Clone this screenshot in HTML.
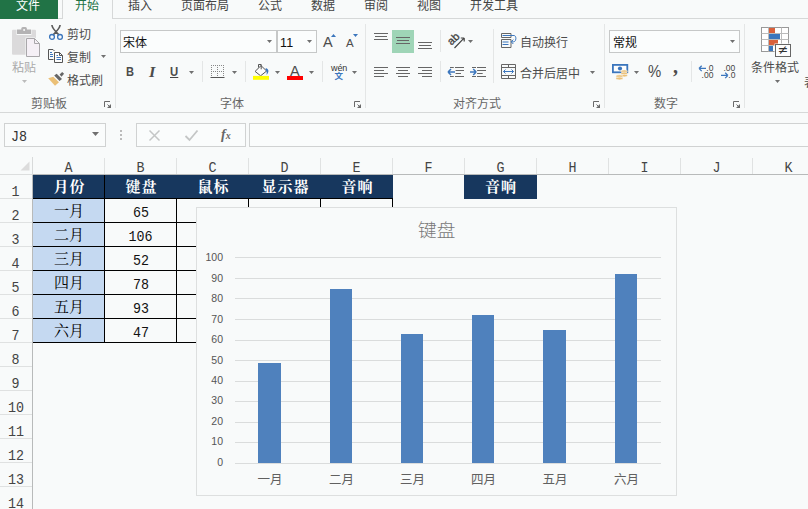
<!DOCTYPE html>
<html lang="zh-CN"><head><meta charset="utf-8"><title>Excel</title>
<style>
*{margin:0;padding:0;box-sizing:border-box}
html,body{width:808px;height:509px;overflow:hidden;background:#f8fafa}
body{position:relative;font-family:"Liberation Sans","Noto Sans CJK SC",sans-serif;font-size:12px;color:#444;line-height:1}
.a{position:absolute}
.t{position:absolute;white-space:nowrap;font-size:12px;line-height:14px;color:#4c4c4c;margin-top:1px}
.tab{position:absolute;top:-1px;font-size:12px;line-height:14px;color:#444;white-space:nowrap}
.gl{position:absolute;top:97px;font-size:12px;line-height:14px;color:#666;white-space:nowrap}
.vs{position:absolute;width:1px;background:#e4e6e6}
.arr{position:absolute;width:5px;height:3px;background:#707070;clip-path:polygon(0 0,100% 0,50% 100%)}
.ch{position:absolute;top:157px;height:17px;font-family:"Liberation Mono","Noto Serif CJK SC",monospace;font-size:15px;line-height:17px;text-align:center;color:#444;width:72px;margin-top:3px}
.sx{display:inline-block;transform:scaleX(0.889)}
.rh{position:absolute;left:0;width:32px;text-align:center;font-family:"Liberation Mono","Noto Serif CJK SC",monospace;font-size:15px;line-height:16px;color:#444;margin-top:3px}
.hd{position:absolute;background:#17375e;color:#fff;font-family:"Liberation Serif","Noto Serif CJK SC",serif;font-weight:bold;font-size:15px;letter-spacing:1px;padding-left:1px;line-height:24px;text-align:center;height:24px}
.mc{position:absolute;background:#c5d9f1;color:#000;font-family:"Liberation Serif","Noto Serif CJK SC",serif;font-size:15px;line-height:24px;text-align:center}
.nc{position:absolute;color:#111;font-family:"Liberation Mono","Noto Serif CJK SC",monospace;font-size:15px;line-height:24px;text-align:center;padding-top:2px}
.bl{position:absolute;background:#000}
.nb{font-family:"Liberation Mono","Noto Serif CJK SC",monospace;font-size:15px;line-height:16px;color:#333}
.yl{position:absolute;left:198px;width:25px;text-align:right;font-size:10.5px;line-height:12px;color:#555}
.xl{position:absolute;top:473px;margin-left:0.5px;width:60px;text-align:center;font-size:12.5px;line-height:15px;color:#606060}
.g{position:absolute;left:235px;width:426px;height:1px;background:#dadcdc}
.bar{position:absolute;background:#4f81bd}
.dl{position:absolute;width:7px;height:6px}
</style></head>
<body>
<div class="a" style="left:0;top:18px;width:808px;height:1px;background:#d6d8d8"></div>
<div class="a" style="left:0;top:0;width:58px;height:19px;background:#217346"></div>
<div class="tab" style="left:16px;color:#fff">文件</div>
<div class="a" style="left:62px;top:-2px;width:51px;height:21px;background:#f8fafa;border:1px solid #d6d8d8;border-bottom:none"></div>
<div class="tab" style="left:75px;color:#217346">开始</div>
<div class="tab" style="left:128px">插入</div>
<div class="tab" style="left:181px">页面布局</div>
<div class="tab" style="left:258px">公式</div>
<div class="tab" style="left:311px">数据</div>
<div class="tab" style="left:364px">审阅</div>
<div class="tab" style="left:417px">视图</div>
<div class="tab" style="left:470px">开发工具</div>
<div class="a" style="left:0;top:112px;width:808px;height:1px;background:#d6d8d8"></div>
<div class="vs" style="left:115px;top:24px;height:84px"></div>
<div class="vs" style="left:365px;top:24px;height:84px"></div>
<div class="vs" style="left:604px;top:24px;height:84px"></div>
<div class="vs" style="left:744px;top:24px;height:84px"></div>
<div class="vs" style="left:202px;top:61px;height:21px"></div>
<div class="vs" style="left:245px;top:61px;height:21px"></div>
<div class="vs" style="left:322px;top:61px;height:21px"></div>
<div class="vs" style="left:440px;top:61px;height:21px"></div>
<div class="vs" style="left:691px;top:61px;height:21px"></div>
<div class="vs" style="left:440px;top:30px;height:22px"></div>
<div class="vs" style="left:493px;top:29px;height:54px"></div>
<div class="gl" style="left:31px">剪贴板</div>
<div class="gl" style="left:220px">字体</div>
<div class="gl" style="left:453px">对齐方式</div>
<div class="gl" style="left:654px">数字</div>
<svg class="a" style="left:104px;top:101px" width="8" height="7" viewBox="0 0 8 7"><path d="M0.5 6V0.5H6" fill="none" stroke="#6a6a6a"/><path d="M7 3V7H3Z" fill="#6a6a6a"/><path d="M3.5 3.5L6 6" stroke="#6a6a6a" fill="none"/></svg>
<svg class="a" style="left:354px;top:101px" width="8" height="7" viewBox="0 0 8 7"><path d="M0.5 6V0.5H6" fill="none" stroke="#6a6a6a"/><path d="M7 3V7H3Z" fill="#6a6a6a"/><path d="M3.5 3.5L6 6" stroke="#6a6a6a" fill="none"/></svg>
<svg class="a" style="left:593px;top:101px" width="8" height="7" viewBox="0 0 8 7"><path d="M0.5 6V0.5H6" fill="none" stroke="#6a6a6a"/><path d="M7 3V7H3Z" fill="#6a6a6a"/><path d="M3.5 3.5L6 6" stroke="#6a6a6a" fill="none"/></svg>
<svg class="a" style="left:733px;top:101px" width="8" height="7" viewBox="0 0 8 7"><path d="M0.5 6V0.5H6" fill="none" stroke="#6a6a6a"/><path d="M7 3V7H3Z" fill="#6a6a6a"/><path d="M3.5 3.5L6 6" stroke="#6a6a6a" fill="none"/></svg>
<svg class="a" style="left:11px;top:26px" width="31" height="32" viewBox="0 0 31 32">
<rect x="1" y="3.8" width="24" height="25" rx="1" fill="#dbdadb"/>
<rect x="5.5" y="3" width="15" height="6" fill="#f8fafa"/>
<rect x="6" y="3.5" width="14" height="4.5" fill="#b4b3b4"/>
<rect x="10.3" y="0.9" width="5.6" height="5" rx="1.5" fill="#b4b3b4"/>
<circle cx="13.1" cy="3.9" r="1" fill="#f8fafa"/>
<path d="M14.5 11.5H24L29.5 17V31.5H14.5Z" fill="#f8fafa"/>
<path d="M15.5 12.5H23.5L28.5 17.5V30.5H15.5Z" fill="#f5f0f6" stroke="#a9a7aa"/>
<path d="M23.5 12.5V17.5H28.5" fill="none" stroke="#a9a7aa"/>
</svg>
<div class="t" style="left:12px;top:60px;color:#aaa">粘贴</div>
<div class="arr" style="left:22px;top:80px;background:#bbb"></div>
<svg class="a" style="left:48px;top:25px" width="16" height="16" viewBox="0 0 16 16">
<path d="M4 0.5C4.3 3 6 5 10.6 9.6M12 0.5C11.7 3 10 5 5.4 9.6" stroke="#5a5a5a" stroke-width="1.7" fill="none" stroke-linecap="round"/>
<circle cx="4" cy="11.9" r="2.4" fill="none" stroke="#3b76bd" stroke-width="1.3"/>
<circle cx="12" cy="11.9" r="2.4" fill="none" stroke="#3b76bd" stroke-width="1.3"/>
</svg>
<div class="t" style="left:67px;top:27px">剪切</div>
<svg class="a" style="left:48px;top:49px" width="16" height="15" viewBox="0 0 16 15">
<path d="M5.5 10.5H0.5V0.5H5L6.5 2" fill="none" stroke="#555"/>
<path d="M2 3.5H4M2 5.5H5M2 7.5H5" stroke="#3b76bd"/>
<path d="M6.5 3.5H11.5L14.5 6.5V13.5H6.5Z" fill="#fdfdfd" stroke="#555"/>
<path d="M11.5 3.5V6.5H14.5" fill="none" stroke="#555"/>
<path d="M8.5 6.5H10M8.5 8.5H13M8.5 10.5H13" stroke="#3b76bd"/>
</svg>
<div class="t" style="left:67px;top:50px">复制</div>
<div class="arr" style="left:101px;top:55px"></div>
<svg class="a" style="left:48px;top:71px" width="17" height="16" viewBox="0 0 17 16">
<path d="M14.2 0.9L16.1 2.8L13.5 5.7L11.6 3.5Z" fill="#666"/>
<path d="M8.7 2.8L14 8L11.5 10L6.2 4.6Z" fill="#666"/>
<path d="M5.3 5.8L11 11.2L7 14.8L0.2 7.3Z" fill="#ebc077"/>
</svg>
<div class="t" style="left:67px;top:73px">格式刷</div>
<div class="a" style="left:120px;top:30px;width:157px;height:23px;border:1px solid #c6c8c8;background:#fbfdfd"></div>
<div class="t" style="left:123px;top:35px;color:#111">宋体</div>
<div class="arr" style="left:267px;top:40px"></div>
<div class="a" style="left:277px;top:30px;width:40px;height:23px;border:1px solid #c6c8c8;background:#fbfdfd"></div>
<div class="t" style="left:280px;top:35px;color:#111;font-size:12.5px;letter-spacing:0.3px">11</div>
<div class="arr" style="left:307px;top:40px"></div>
<div class="t" style="left:323px;top:33px;font-size:14.5px;line-height:16px">A</div>
<div class="a" style="left:331px;top:34px;width:5px;height:3px;background:#3b76bd;clip-path:polygon(50% 0,100% 100%,0 100%)"></div>
<div class="t" style="left:346px;top:35px;font-size:11.5px;line-height:14px">A</div>
<div class="a" style="left:353px;top:34px;width:5px;height:3px;background:#3b76bd;clip-path:polygon(0 0,100% 0,50% 100%)"></div>
<div class="t" style="left:126px;top:64px;font-weight:bold;font-size:12.3px;line-height:15px;transform:scaleX(0.9);transform-origin:0 0">B</div>
<div class="t" style="left:149px;top:64px;font-style:italic;font-family:'Liberation Serif',serif;font-weight:bold;font-size:13.6px;line-height:15px;transform:scaleX(1.2);transform-origin:0 0">I</div>
<div class="t" style="left:170px;top:64px;font-size:12.3px;font-weight:bold;line-height:15px;border-bottom:1px solid #444;height:13px;transform:scaleX(0.92);transform-origin:0 0">U</div>
<div class="arr" style="left:189px;top:71px"></div>
<svg class="a" style="left:210px;top:64px" width="15" height="15" viewBox="0 0 15 15">
<path d="M1 1.5H14M1 7.5H14M1.5 1V13M7.5 1V13M13.5 1V13" stroke="#888" stroke-dasharray="1 1" fill="none"/>
<path d="M0.5 13.5H14.5" stroke="#555"/>
</svg>
<div class="arr" style="left:232px;top:71px"></div>
<svg class="a" style="left:253px;top:63px" width="17" height="18" viewBox="0 0 17 18">
<path d="M8 2.6L13.6 8L7.6 12.8L2.1 8.4Z" fill="#fdfdfd" stroke="#555"/>
<path d="M5.5 4.5V1.5H8.2V6.3" fill="none" stroke="#555"/>
<path d="M12.8 5C15.6 6 16.6 8.5 13.6 12C13.8 9.5 14 8.5 12.6 7Z" fill="#3b76bd"/>
<rect x="0" y="12.9" width="16" height="3.9" fill="#ffff00"/>
</svg>
<div class="arr" style="left:275px;top:71px"></div>
<div class="t" style="left:290px;top:62px;font-size:14.5px;line-height:16px">A</div>
<div class="a" style="left:287px;top:76px;width:16px;height:4px;background:#f00"></div>
<div class="arr" style="left:309px;top:71px"></div>
<div class="t" style="left:331px;top:61px;font-size:9px;line-height:12px;letter-spacing:-0.1px;color:#333">wén</div>
<div class="t" style="left:334.5px;top:69.5px;font-size:8.5px;line-height:10px;color:#3b76bd;font-weight:bold">文</div>
<div class="arr" style="left:352px;top:71px"></div>
<div class="a" style="left:374.0px;top:33px;width:14px;height:1px;background:#666"></div>
<div class="a" style="left:375.0px;top:36px;width:12px;height:1px;background:#666"></div>
<div class="a" style="left:374.0px;top:39px;width:14px;height:1px;background:#666"></div>
<div class="a" style="left:392px;top:30px;width:22px;height:23px;background:#9fd5b7"></div>
<div class="a" style="left:396.0px;top:37px;width:14px;height:1px;background:#666"></div>
<div class="a" style="left:397.0px;top:40px;width:12px;height:1px;background:#666"></div>
<div class="a" style="left:396.0px;top:43px;width:14px;height:1px;background:#666"></div>
<div class="a" style="left:418.0px;top:42px;width:14px;height:1px;background:#666"></div>
<div class="a" style="left:419.0px;top:45px;width:12px;height:1px;background:#666"></div>
<div class="a" style="left:418.0px;top:48px;width:14px;height:1px;background:#666"></div>
<div class="a" style="left:374px;top:67px;width:14px;height:1px;background:#666"></div>
<div class="a" style="left:374px;top:70px;width:10px;height:1px;background:#666"></div>
<div class="a" style="left:374px;top:73px;width:14px;height:1px;background:#666"></div>
<div class="a" style="left:374px;top:76px;width:10px;height:1px;background:#666"></div>
<div class="a" style="left:396.0px;top:67px;width:14px;height:1px;background:#666"></div>
<div class="a" style="left:398.0px;top:70px;width:10px;height:1px;background:#666"></div>
<div class="a" style="left:396.0px;top:73px;width:14px;height:1px;background:#666"></div>
<div class="a" style="left:398.0px;top:76px;width:10px;height:1px;background:#666"></div>
<div class="a" style="left:418px;top:67px;width:14px;height:1px;background:#666"></div>
<div class="a" style="left:422px;top:70px;width:10px;height:1px;background:#666"></div>
<div class="a" style="left:418px;top:73px;width:14px;height:1px;background:#666"></div>
<div class="a" style="left:422px;top:76px;width:10px;height:1px;background:#666"></div>
<svg class="a" style="left:446px;top:31px" width="20" height="19" viewBox="0 0 20 19">
<text x="0" y="0" font-family="Liberation Sans, sans-serif" font-size="11" fill="#444" stroke="#444" stroke-width="0.35" transform="translate(5.6,14.8) rotate(-45)">ab</text>
<path d="M8.5 17L18 7.2M18.2 7H14.8M18.2 7V10.4" stroke="#444" stroke-width="1.2" fill="none"/>
</svg>
<div class="arr" style="left:468px;top:40px"></div>
<svg class="a" style="left:447px;top:64px" width="18" height="15" viewBox="0 0 18 15">
<path d="M3 3.5H6.8M8 3.5H17M8.6 6.5H17M8.6 9.5H14M3 12.5H6.8M8 12.5H17" stroke="#666"/>
<path d="M1.2 8H8M1 8L4 5M1 8L4 11" stroke="#3b76bd" stroke-width="1.5" fill="none"/>
</svg>
<svg class="a" style="left:469px;top:64px" width="18" height="15" viewBox="0 0 18 15">
<path d="M3 3.5H7M8 3.5H17M8.1 6.5H17M8.1 9.5H13.7M3 12.5H7M8 12.5H17" stroke="#666"/>
<path d="M1 8H7M7.2 8L4.2 5M7.2 8L4.2 11" stroke="#3b76bd" stroke-width="1.5" fill="none"/>
</svg>
<svg class="a" style="left:501px;top:33px" width="16" height="15" viewBox="0 0 16 15">
<path d="M0.5 0.5H10V4.5H0.5ZM0.5 6.5H10V14.5H0.5Z" fill="none" stroke="#666"/>
<path d="M1.5 2.5H13C15.6 2.5 15.6 8.8 12.5 8.8H10.5M12.3 6.6L10.2 8.8L12.3 11M1.5 9H7.5M1.5 11.5H7.5" fill="none" stroke="#3b76bd"/>
</svg>
<div class="t" style="left:520px;top:35px">自动换行</div>
<svg class="a" style="left:501px;top:64px" width="16" height="16" viewBox="0 0 16 16">
<path d="M0.5 0.5H14.5V14.5H0.5ZM0.5 3.5H14.5M0.5 11.5H14.5M7.5 0.5V3.5M7.5 11.5V14.5" fill="none" stroke="#666"/>
<path d="M2.5 7.5H12.5M2.5 7.5L4.5 5.5M2.5 7.5L4.5 9.5M12.5 7.5L10.5 5.5M12.5 7.5L10.5 9.5" fill="none" stroke="#3b76bd"/>
</svg>
<div class="t" style="left:520px;top:66px">合并后居中</div>
<div class="arr" style="left:590px;top:71px"></div>
<div class="a" style="left:609px;top:30px;width:131px;height:23px;border:1px solid #c6c8c8;background:#fbfdfd"></div>
<div class="t" style="left:613px;top:35px;color:#111">常规</div>
<div class="arr" style="left:730px;top:40px"></div>
<svg class="a" style="left:612px;top:64px" width="17" height="17" viewBox="0 0 17 17">
<rect x="0.9" y="0.9" width="14.4" height="7.4" fill="#fdfdfd" stroke="#3b76bd" stroke-width="1.8"/>
<circle cx="8" cy="4.5" r="2.1" fill="#3b76bd"/>
<ellipse cx="12.2" cy="7.2" rx="3.3" ry="1.3" fill="#ebc077" stroke="#f8fafa" stroke-width="0.6"/>
<ellipse cx="12.2" cy="9.4" rx="3.3" ry="1.3" fill="#ebc077" stroke="#f8fafa" stroke-width="0.6"/>
<ellipse cx="12.2" cy="11.6" rx="3.3" ry="1.3" fill="#ebc077" stroke="#f8fafa" stroke-width="0.6"/>
<ellipse cx="7.4" cy="12.2" rx="3.5" ry="1.4" fill="#ebc077" stroke="#f8fafa" stroke-width="0.6"/>
<ellipse cx="7.4" cy="14.5" rx="3.5" ry="1.4" fill="#ebc077" stroke="#f8fafa" stroke-width="0.6"/>
</svg>
<div class="arr" style="left:634px;top:71px"></div>
<div class="t" style="left:648px;top:62px;font-size:16px;line-height:17px;transform:scaleX(0.93);transform-origin:0 0">%</div>
<div class="t" style="left:673px;top:54px;font-size:20px;line-height:22px;font-family:'Liberation Serif',serif;font-weight:bold">,</div>
<svg class="a" style="left:698px;top:64px" width="17" height="15" viewBox="0 0 17 15">
<path d="M1.2 4.4H8M1 4.4L3.7 1.7M1 4.4L3.7 7.1" stroke="#3b76bd" stroke-width="1.3" fill="none"/>
<text x="8.3" y="6.7" font-family="Liberation Sans, sans-serif" font-size="8.5" fill="#444">.0</text>
<text x="3.6" y="14.1" font-family="Liberation Sans, sans-serif" font-size="8.5" fill="#444">.00</text>
</svg>
<svg class="a" style="left:720px;top:64px" width="17" height="15" viewBox="0 0 17 15">
<text x="3.5" y="6.7" font-family="Liberation Sans, sans-serif" font-size="8.5" fill="#444">.00</text>
<path d="M1 11.4H7.7M7.9 11.4L5.2 8.7M7.9 11.4L5.2 14.1" stroke="#3b76bd" stroke-width="1.3" fill="none"/>
<text x="8.3" y="14.1" font-family="Liberation Sans, sans-serif" font-size="8.5" fill="#444">.0</text>
</svg>
<svg class="a" style="left:761px;top:27px" width="31" height="30" viewBox="0 0 31 30">
<rect x="0.5" y="0.5" width="27" height="24" fill="#fff" stroke="#999"/>
<path d="M0.5 6.5H27.5M0.5 12.5H27.5M0.5 18.5H27.5M7.5 0.5V24.5M20.5 0.5V24.5" stroke="#bbb" fill="none"/>
<rect x="8" y="1" width="6" height="5" fill="#d9603b"/>
<rect x="8" y="7" width="11" height="5" fill="#3b76bd"/>
<rect x="8" y="13" width="9" height="5" fill="#d9603b"/>
<rect x="8" y="19" width="4" height="5" fill="#3b76bd"/>
<rect x="13.5" y="16.5" width="17" height="14" fill="#f8fafa"/><rect x="14.5" y="17.5" width="15" height="12" fill="#fdfdfd" stroke="#666"/>
<text x="16.7" y="27.3" font-family="DejaVu Sans, sans-serif" font-size="12.5" fill="#333">≠</text>
</svg>
<div class="t" style="left:751px;top:60px">条件格式</div>
<div class="arr" style="left:775px;top:80px"></div>
<div class="t" style="left:804px;top:75px">表格</div>
<div class="a" style="left:4px;top:123px;width:102px;height:24px;border:1px solid #d0d2d2;background:#fafcfc"></div>
<div class="t nb" style="left:11px;top:129px"><span class="sx" style="transform-origin:0 50%">J8</span></div>
<div class="arr" style="left:92px;top:132px;width:7px;height:4px"></div>
<div class="a" style="left:120px;top:130px;width:2px;height:2px;background:#bbb"></div>
<div class="a" style="left:120px;top:134px;width:2px;height:2px;background:#bbb"></div>
<div class="a" style="left:120px;top:138px;width:2px;height:2px;background:#bbb"></div>
<div class="a" style="left:136px;top:123px;width:110px;height:24px;border:1px solid #d0d2d2;background:#fafcfc"></div>
<svg class="a" style="left:148px;top:129px" width="13" height="13" viewBox="0 0 13 13"><path d="M1.5 1.5L11.5 11.5M11.5 1.5L1.5 11.5" stroke="#c4c6c6" stroke-width="1.5" fill="none"/></svg>
<svg class="a" style="left:184px;top:129px" width="15" height="13" viewBox="0 0 15 13"><path d="M1.5 7L5.5 11L13.5 1.5" stroke="#c4c6c6" stroke-width="1.8" fill="none"/></svg>
<div class="t" style="left:221px;top:126px;font-family:'Liberation Serif',serif;font-style:italic;font-weight:bold;font-size:14px;line-height:16px;color:#666">f<span style="font-size:10px">x</span></div>
<div class="a" style="left:249px;top:123px;width:570px;height:24px;border:1px solid #d0d2d2;background:#fafcfc"></div>
<div class="a" style="left:0;top:174px;width:33px;height:1px;background:#dcdede"></div>
<div class="a" style="left:33px;top:174px;width:775px;height:1px;background:#b8baba"></div>
<div class="a" style="left:32px;top:157px;width:1px;height:18px;background:#d8dada"></div>
<div class="a" style="left:32px;top:175px;width:1px;height:334px;background:#b8baba"></div>
<svg class="a" style="left:20px;top:161px" width="10" height="10" viewBox="0 0 10 10"><path d="M9.5 0.5V9.5H0.5Z" fill="#dcdcdc"/></svg>
<div class="ch" style="left:33px"><span class="sx">A</span></div>
<div class="a" style="left:104px;top:158px;width:1px;height:16px;background:#e0e2e2"></div>
<div class="ch" style="left:105px"><span class="sx">B</span></div>
<div class="a" style="left:176px;top:158px;width:1px;height:16px;background:#e0e2e2"></div>
<div class="ch" style="left:177px"><span class="sx">C</span></div>
<div class="a" style="left:248px;top:158px;width:1px;height:16px;background:#e0e2e2"></div>
<div class="ch" style="left:249px"><span class="sx">D</span></div>
<div class="a" style="left:320px;top:158px;width:1px;height:16px;background:#e0e2e2"></div>
<div class="ch" style="left:321px"><span class="sx">E</span></div>
<div class="a" style="left:392px;top:158px;width:1px;height:16px;background:#e0e2e2"></div>
<div class="ch" style="left:393px"><span class="sx">F</span></div>
<div class="a" style="left:464px;top:158px;width:1px;height:16px;background:#e0e2e2"></div>
<div class="ch" style="left:465px"><span class="sx">G</span></div>
<div class="a" style="left:536px;top:158px;width:1px;height:16px;background:#e0e2e2"></div>
<div class="ch" style="left:537px"><span class="sx">H</span></div>
<div class="a" style="left:608px;top:158px;width:1px;height:16px;background:#e0e2e2"></div>
<div class="ch" style="left:609px"><span class="sx">I</span></div>
<div class="a" style="left:680px;top:158px;width:1px;height:16px;background:#e0e2e2"></div>
<div class="ch" style="left:681px"><span class="sx">J</span></div>
<div class="a" style="left:752px;top:158px;width:1px;height:16px;background:#e0e2e2"></div>
<div class="ch" style="left:753px"><span class="sx">K</span></div>
<div class="a" style="left:824px;top:158px;width:1px;height:16px;background:#e0e2e2"></div>
<div class="rh" style="top:182px"><span class="sx">1</span></div>
<div class="a" style="left:0;top:198px;width:32px;height:1px;background:#dfe1e1"></div>
<div class="rh" style="top:206px"><span class="sx">2</span></div>
<div class="a" style="left:0;top:222px;width:32px;height:1px;background:#dfe1e1"></div>
<div class="rh" style="top:230px"><span class="sx">3</span></div>
<div class="a" style="left:0;top:246px;width:32px;height:1px;background:#dfe1e1"></div>
<div class="rh" style="top:254px"><span class="sx">4</span></div>
<div class="a" style="left:0;top:270px;width:32px;height:1px;background:#dfe1e1"></div>
<div class="rh" style="top:278px"><span class="sx">5</span></div>
<div class="a" style="left:0;top:294px;width:32px;height:1px;background:#dfe1e1"></div>
<div class="rh" style="top:302px"><span class="sx">6</span></div>
<div class="a" style="left:0;top:318px;width:32px;height:1px;background:#dfe1e1"></div>
<div class="rh" style="top:326px"><span class="sx">7</span></div>
<div class="a" style="left:0;top:342px;width:32px;height:1px;background:#dfe1e1"></div>
<div class="rh" style="top:350px"><span class="sx">8</span></div>
<div class="a" style="left:0;top:366px;width:32px;height:1px;background:#dfe1e1"></div>
<div class="rh" style="top:374px"><span class="sx">9</span></div>
<div class="a" style="left:0;top:390px;width:32px;height:1px;background:#dfe1e1"></div>
<div class="rh" style="top:398px"><span class="sx">10</span></div>
<div class="a" style="left:0;top:414px;width:32px;height:1px;background:#dfe1e1"></div>
<div class="rh" style="top:422px"><span class="sx">11</span></div>
<div class="a" style="left:0;top:438px;width:32px;height:1px;background:#dfe1e1"></div>
<div class="rh" style="top:446px"><span class="sx">12</span></div>
<div class="a" style="left:0;top:462px;width:32px;height:1px;background:#dfe1e1"></div>
<div class="rh" style="top:470px"><span class="sx">13</span></div>
<div class="a" style="left:0;top:486px;width:32px;height:1px;background:#dfe1e1"></div>
<div class="rh" style="top:494px"><span class="sx">14</span></div>
<div class="a" style="left:0;top:510px;width:32px;height:1px;background:#dfe1e1"></div>
<div class="hd" style="left:33px;top:175px;width:72px">月份</div>
<div class="hd" style="left:105px;top:175px;width:72px">键盘</div>
<div class="hd" style="left:177px;top:175px;width:72px">鼠标</div>
<div class="hd" style="left:249px;top:175px;width:72px">显示器</div>
<div class="hd" style="left:321px;top:175px;width:72px">音响</div>
<div class="hd" style="left:464px;top:175px;width:73px">音响</div>
<div class="mc" style="left:33px;top:199px;width:72px;height:24px;line-height:25px">一月</div>
<div class="nc" style="left:105px;top:199px;width:72px;height:24px;line-height:25px"><span class="sx">65</span></div>
<div class="mc" style="left:33px;top:223px;width:72px;height:24px;line-height:25px">二月</div>
<div class="nc" style="left:105px;top:223px;width:72px;height:24px;line-height:25px"><span class="sx">106</span></div>
<div class="mc" style="left:33px;top:247px;width:72px;height:24px;line-height:25px">三月</div>
<div class="nc" style="left:105px;top:247px;width:72px;height:24px;line-height:25px"><span class="sx">52</span></div>
<div class="mc" style="left:33px;top:271px;width:72px;height:24px;line-height:25px">四月</div>
<div class="nc" style="left:105px;top:271px;width:72px;height:24px;line-height:25px"><span class="sx">78</span></div>
<div class="mc" style="left:33px;top:295px;width:72px;height:24px;line-height:25px">五月</div>
<div class="nc" style="left:105px;top:295px;width:72px;height:24px;line-height:25px"><span class="sx">93</span></div>
<div class="mc" style="left:33px;top:319px;width:72px;height:24px;line-height:25px">六月</div>
<div class="nc" style="left:105px;top:319px;width:72px;height:24px;line-height:25px"><span class="sx">47</span></div>
<div class="bl" style="left:33px;top:198px;width:360px;height:1px"></div>
<div class="bl" style="left:33px;top:222px;width:360px;height:1px"></div>
<div class="bl" style="left:33px;top:246px;width:360px;height:1px"></div>
<div class="bl" style="left:33px;top:270px;width:360px;height:1px"></div>
<div class="bl" style="left:33px;top:294px;width:360px;height:1px"></div>
<div class="bl" style="left:33px;top:318px;width:360px;height:1px"></div>
<div class="bl" style="left:33px;top:342px;width:360px;height:1px"></div>
<div class="bl" style="left:104px;top:175px;width:1px;height:168px"></div>
<div class="bl" style="left:176px;top:198px;width:1px;height:145px"></div>
<div class="bl" style="left:248px;top:198px;width:1px;height:145px"></div>
<div class="bl" style="left:320px;top:198px;width:1px;height:145px"></div>
<div class="bl" style="left:392px;top:198px;width:1px;height:145px"></div>
<div class="a" style="left:196px;top:207px;width:481px;height:289px;background:#f8fafa;border:1px solid #dddfdf"></div>
<div class="t" style="left:418px;top:218.5px;font-size:18.67px;line-height:22px;color:#777;font-weight:300">键盘</div>
<div class="g" style="top:463px"></div>
<div class="yl" style="top:456px">0</div>
<div class="g" style="top:442px"></div>
<div class="yl" style="top:435px">10</div>
<div class="g" style="top:422px"></div>
<div class="yl" style="top:415px">20</div>
<div class="g" style="top:401px"></div>
<div class="yl" style="top:394px">30</div>
<div class="g" style="top:381px"></div>
<div class="yl" style="top:374px">40</div>
<div class="g" style="top:360px"></div>
<div class="yl" style="top:354px">50</div>
<div class="g" style="top:340px"></div>
<div class="yl" style="top:333px">60</div>
<div class="g" style="top:319px"></div>
<div class="yl" style="top:313px">70</div>
<div class="g" style="top:298px"></div>
<div class="yl" style="top:292px">80</div>
<div class="g" style="top:278px"></div>
<div class="yl" style="top:272px">90</div>
<div class="g" style="top:257px"></div>
<div class="yl" style="top:251px">100</div>
<div class="bar" style="left:258px;top:363px;width:23px;height:100px"></div>
<div class="xl" style="left:239.5px">一月</div>
<div class="bar" style="left:330px;top:289px;width:22px;height:174px"></div>
<div class="xl" style="left:311.0px">二月</div>
<div class="bar" style="left:401px;top:334px;width:22px;height:129px"></div>
<div class="xl" style="left:382.0px">三月</div>
<div class="bar" style="left:472px;top:315px;width:22px;height:148px"></div>
<div class="xl" style="left:453.0px">四月</div>
<div class="bar" style="left:543px;top:330px;width:23px;height:133px"></div>
<div class="xl" style="left:524.5px">五月</div>
<div class="bar" style="left:615px;top:274px;width:22px;height:189px"></div>
<div class="xl" style="left:596.0px">六月</div>
</body></html>
